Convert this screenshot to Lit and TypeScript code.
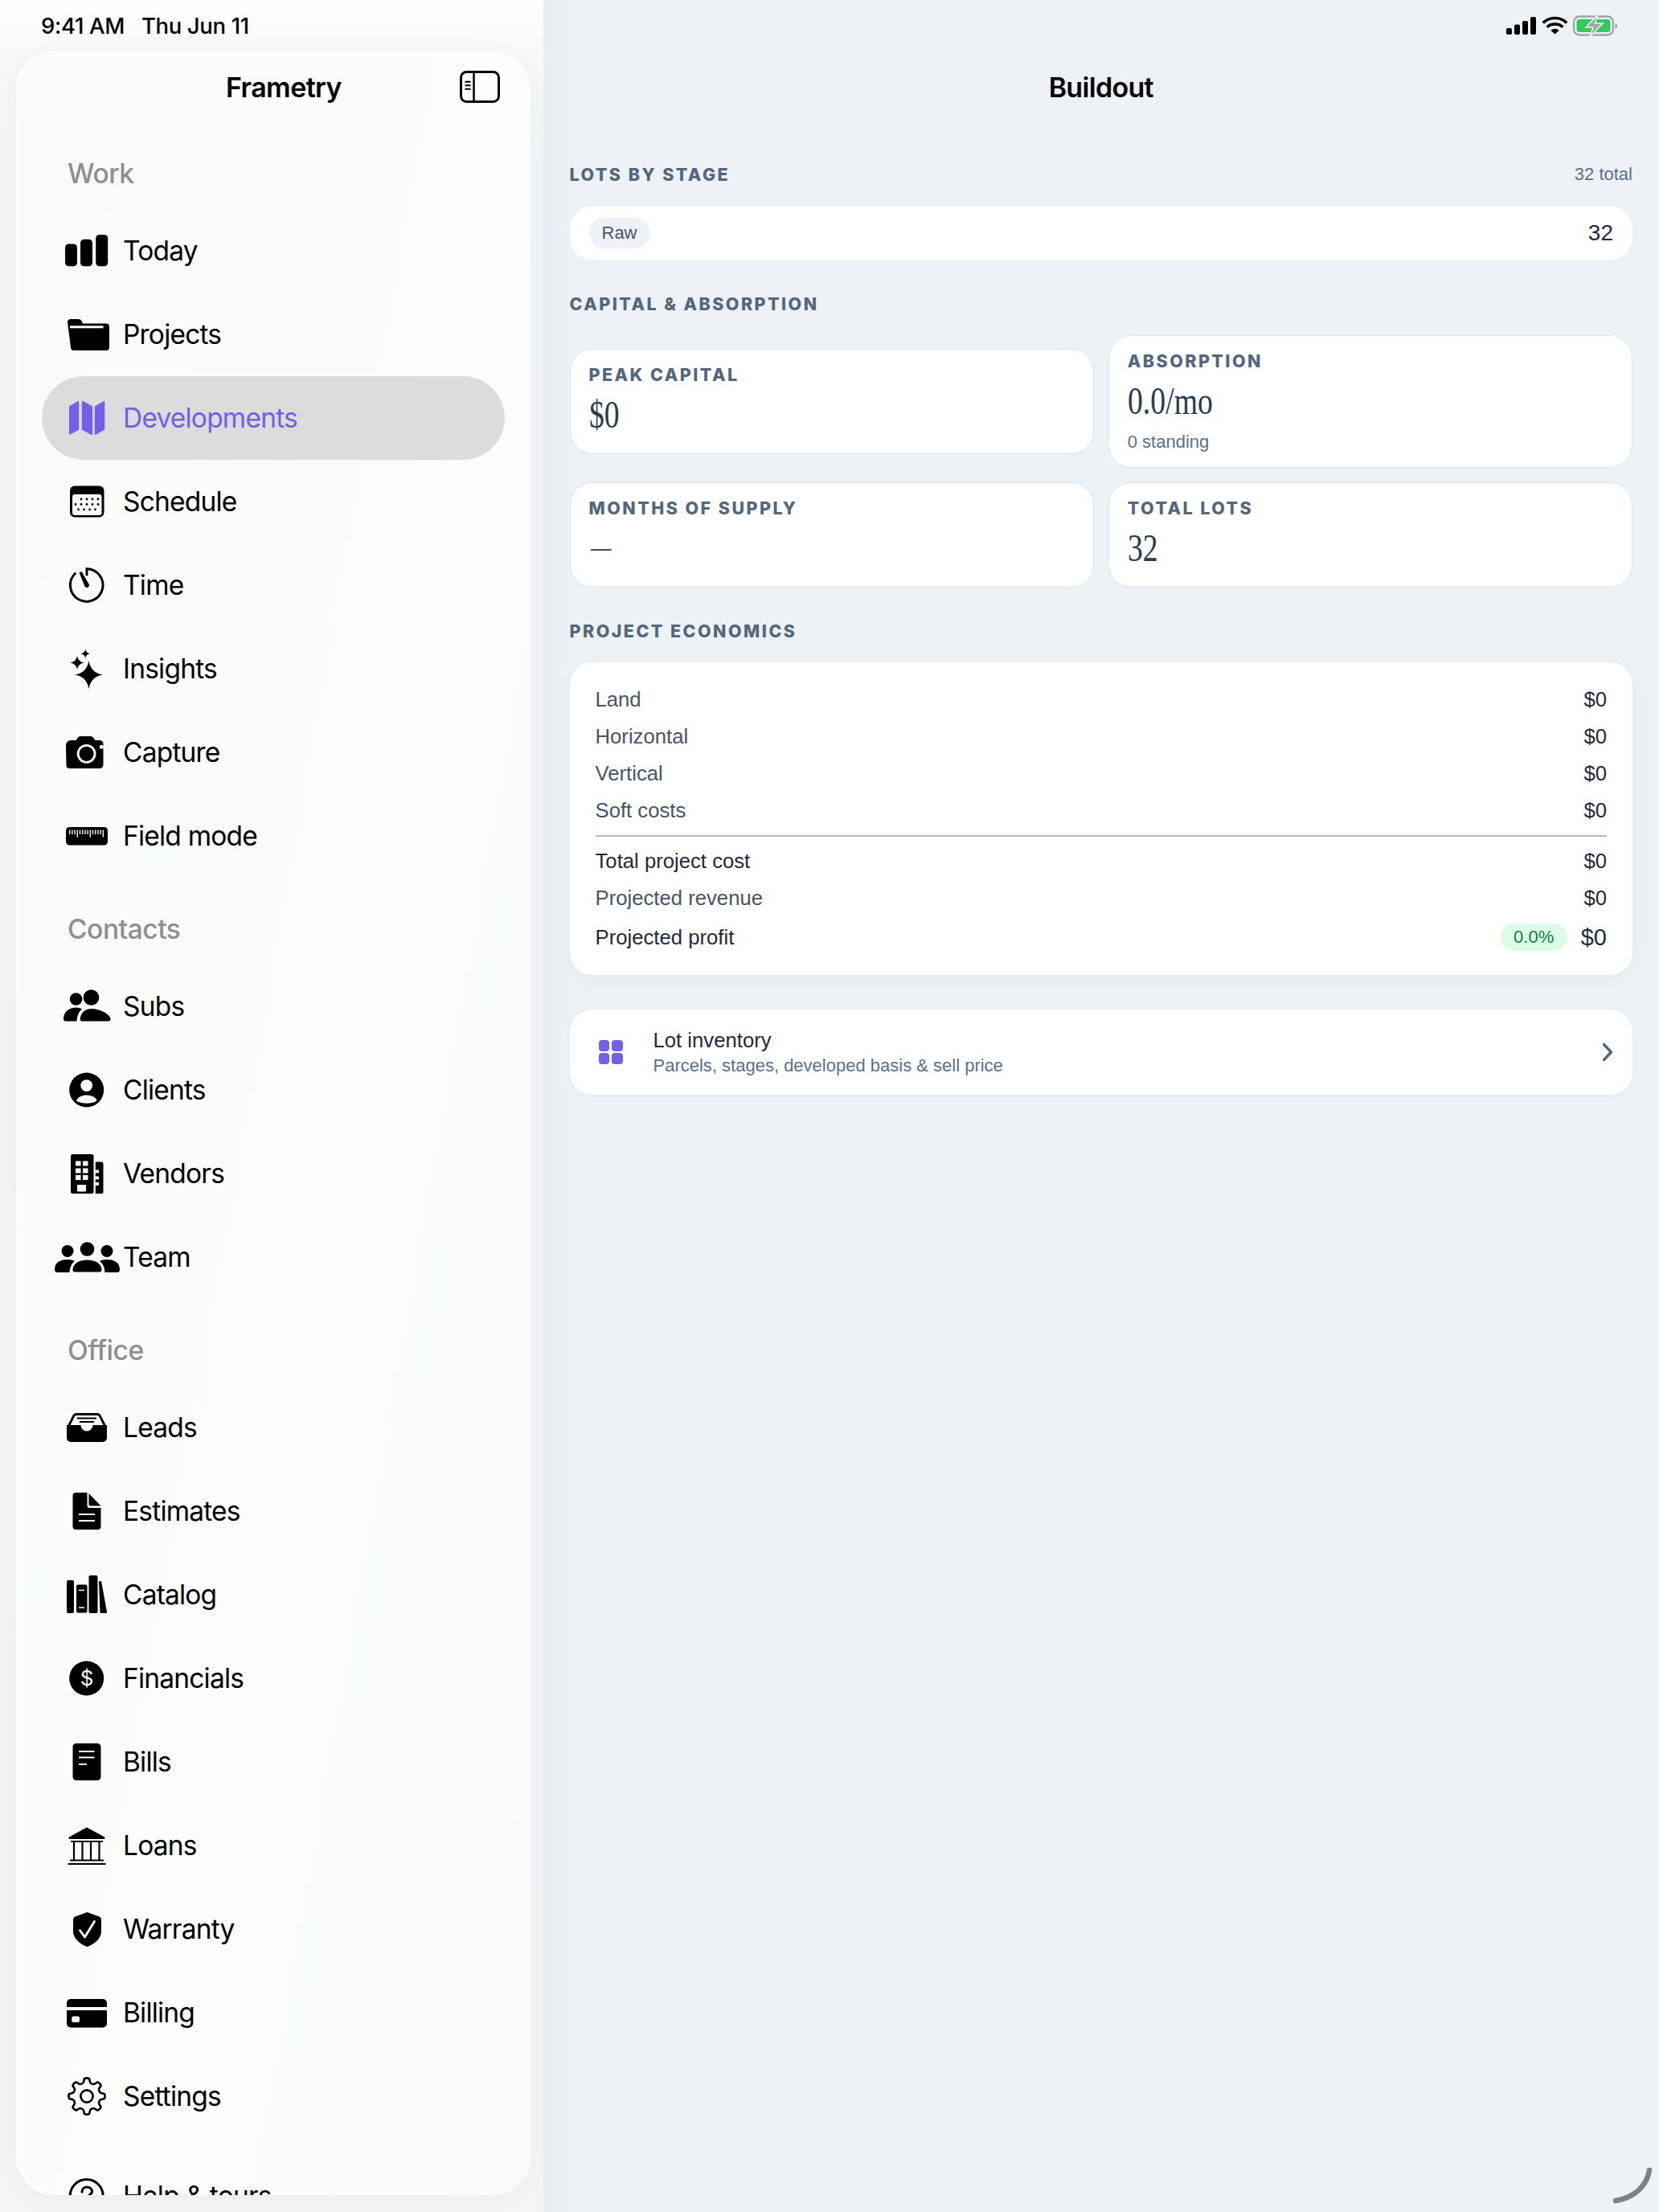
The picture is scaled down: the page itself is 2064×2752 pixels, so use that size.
import { LitElement, html, css, svg } from "lit";
import { customElement } from "lit/decorators.js";

const star = (cx: number, cy: number, r: number) => {
  const k = 0.14 * r;
  return `M${cx} ${cy - r}Q${cx + k} ${cy - k} ${cx + r} ${cy}Q${cx + k} ${cy + k} ${cx} ${cy + r}Q${cx - k} ${cy + k} ${cx - r} ${cy}Q${cx - k} ${cy - k} ${cx} ${cy - r}Z`;
};

const gear = () => {
  const pts: string[] = [];
  const p = (a: number, r: number) => {
    const t = (a * Math.PI) / 180;
    return `${(r * Math.cos(t)).toFixed(2)} ${(r * Math.sin(t)).toFixed(2)}`;
  };
  for (let i = 0; i < 8; i++) {
    const b = i * 45 - 90;
    pts.push(`${i === 0 ? "M" : "L"}${p(b - 14, 17.5)}`);
    pts.push(`L${p(b - 8, 22)}`);
    pts.push(`Q${p(b, 23.5)} ${p(b + 8, 22)}`);
    pts.push(`L${p(b + 14, 17.5)}`);
    pts.push(`Q${p(b + 22.5, 16)} ${p(b + 31, 17.5)}`);
  }
  return pts.join("") + "Z";
};

const BG = "#f9fafa";

const ICONS: Record<string, unknown> = {
  today: svg`<rect x="-27" y="-8.5" width="15" height="27.7" rx="4.5"/><rect x="-8" y="-14.3" width="15" height="33.5" rx="4.5"/><rect x="11.2" y="-20.1" width="15" height="39.3" rx="4.5"/>`,
  projects: svg`<path d="M-24 -15a4 4 0 0 1 4-4h9c3 0 4 1 5 3l1 2.500h29a4 4 0 0 1 4 4v25.500a4 4 0 0 1-4 4h-40a4 4 0 0 1-4-4z"/><rect x="-21" y="-10.700" width="41.600" height="3" fill="${BG}"/>`,
  developments: svg`<g stroke="currentColor" stroke-width="2" stroke-linejoin="round"><path d="M-21 -14L-10.800 -20V14L-21 19.500Z"/><path d="M-5.200 -20L6.100 -14V20L-5.200 14Z"/><path d="M10.800 -14L21.300 -20V14L10.800 20Z"/></g>`,
  schedule: svg`<rect x="-21" y="-19.500" width="42.500" height="39" rx="6"/><rect x="-18" y="-9" width="36.500" height="26" rx="3" fill="${BG}"/>
    ${[[-3, [-3.500, 3.500, 10.500, 17.500].map(x => x - 3.500)], [3.500, [-14, -7, 0, 7, 14]], [9.800, [-10.500, -3.500, 3.500, 10.500]]].flatMap(([y, xs]: any) => xs.map((x: number) => svg`<circle cx="${x}" cy="${y}" r="1.400"/>`))}`,
  time: svg`<g fill="none" stroke="currentColor" stroke-width="3" stroke-linecap="round"><path d="M-14.500 -14.500A20.300 20.300 0 1 0 0 -20.300V-13"/></g><path d="M-9.500 -15.500L-6.500 -17L2.500 -1.500A2.900 2.900 0 1 1 -2.500 1.500Z"/>`,
  insights: svg`<path d="${star(2.5, 7.5, 17.5)}"/><path d="${star(-12, -7.6, 8.5)}"/><path d="${star(-1.8, -18.8, 5.5)}"/>`,
  capture: svg`<path d="M-26 -9a6 6 0 0 1 6-6h6.500l2.500-3.500a4 4 0 0 1 3-1.500h13a4 4 0 0 1 3 1.500l2.500 3.500h5.500a4.500 4.500 0 0 1 4.500 4.500v26a4.500 4.500 0 0 1-4.500 4.500h-37.500a4 4 0 0 1-4-4z"/><circle cx="-.400" cy="1.800" r="10.500" fill="none" stroke="${BG}" stroke-width="2.800"/><circle cx="18.300" cy="-6.700" r="2.500" fill="${BG}"/>`,
  field: svg`<rect x="-26" y="-11" width="52" height="22.500" rx="4.500"/>${Array.from({ length: 14 }, (_, i) => svg`<rect x="${-22 + i * 3.2}" y="-7.500" width="1.400" height="${i % 5 === 3 ? 9 : 5.500}" fill="${BG}"/>`)}`,
  subs: svg`<circle cx="-13.400" cy="-9" r="7.800"/><circle cx="5.500" cy="-11" r="9.800"/><path d="M-29 15.500C-29 7 -22 1.500 -13.500 1.500C-10.500 1.500 -8 2.300 -6 3.500C-10 7 -12 11 -12.500 18.500H-26.500C-28 18.500 -29 17.500 -29 15.500Z"/><path d="M-8.300 15.500C-7.500 7 -1 3 6 3C14 3 28 8 29.500 15.500C30 17.300 28.500 18.500 27 18.500H-6C-7.500 18.500 -8.500 17.300 -8.300 15.500Z"/>`,
  clients: svg`<circle cx="-.3" cy="0" r="21.500"/><circle cx="-.3" cy="-5.400" r="7.400" fill="${BG}"/><path d="M-13 13.500C-11 8.500 -6 6.500 -.3 6.500S11 8.500 12.500 13.500C9 15.800 4 16.800 -.3 16.800S-9.500 15.800 -13 13.500Z" fill="${BG}"/>`,
  vendors: svg`<rect x="-20" y="-24" width="28.500" height="49" rx="2.500"/><path d="M10.800 -14.500H18a2.500 2.500 0 0 1 2.500 2.500V22.500a2.500 2.500 0 0 1-2.500 2.500H10.800Z"/>
    <g fill="${BG}">${[-15.500, -6.500, 2].flatMap(y => [-14, -5].map(x => svg`<rect x="${x}" y="${y}" width="6.500" height="6"/>`))}<rect x="-12" y="14" width="11" height="8.500" rx="1"/>${[-4.500, 3.500, 11].map(y => svg`<rect x="10.500" y="${y}" width="4.500" height="3.800"/>`)}</g>`,
  team: svg`<circle cx="-24" cy="-7.500" r="7.500"/><circle cx="25" cy="-7.500" r="7.500"/><path d="M-40 15.500C-40 6 -32 3 -24 3C-20 3 -17 3.800 -15 5C-19 8.500 -21 12 -21.500 19H-37C-39 19 -40 17.500 -40 15.500Z"/><path d="M41 15.500C41 6 33 3 25 3C21 3 18 3.800 16 5C20 8.500 22 12 22.500 19H38C40 19 41 17.500 41 15.500Z"/><circle cx="0.500" cy="-10" r="8.800"/><path d="M-17.500 15.500C-17 7 -8 3.500 .5 3.500S18 7 18.500 15.500C18.700 17.500 17.500 18.500 16 18.500H-15C-16.500 18.500 -17.700 17.500 -17.500 15.500Z"/>`,
  leads: svg`<path d="M-23 -1L-16.500 -14A4 4 0 0 1 -13 -16.500H13A4 4 0 0 1 16.500 -14L23 -1" fill="none" stroke="currentColor" stroke-width="2.800"/><path d="M-12 -11.500H12M-9 -7H9" stroke="currentColor" stroke-width="2.200" fill="none"/><path d="M-25 -3H-7.500A7.500 7.500 0 0 0 7.500 -3H25V13a5 5 0 0 1-5 5H-20a5 5 0 0 1-5-5Z"/>`,
  estimates: svg`<path d="M-17.500 -19a4 4 0 0 1 4-4H.5V-7a3 3 0 0 0 3 3H17.500V19a4 4 0 0 1-4 4H-13.500a4 4 0 0 1-4-4Z"/><path d="M2.500 -22L17.500 -6.500H4.500a2 2 0 0 1-2-2Z"/><path d="M-10 4H10M-10 12H10" stroke="${BG}" stroke-width="2" fill="none"/>`,
  catalog: svg`<rect x="-25" y="-18" width="9" height="41" rx="2"/><rect x="-13" y="-12.500" width="13.500" height="35" rx="2"/><rect x="2.500" y="-24" width="11" height="47" rx="2"/><path d="M15 -16.500L18 -17L25 21.500C25.200 22.500 24.500 23 23.500 23H18C17 23 16.500 22.500 16.500 21.500Z"/><path d="M-10 -5.500H-3M-10 16H-3" stroke="${BG}" stroke-width="1.600"/>`,
  financials: svg`<circle cx="-.3" cy="0" r="21.500"/><text x="-.3" y="9" text-anchor="middle" font-family="Inter, sans-serif" font-size="26" font-weight="400" fill="${BG}">$</text>`,
  bills: svg`<rect x="-17.500" y="-23" width="35" height="46" rx="4.500"/><path d="M-10 -13H9.500M-10 -5.400H9.500M-10 3H0" stroke="${BG}" stroke-width="2" fill="none"/>`,
  loans: svg`<path d="M0 -22L22 -10V-8.500H-22V-10Z" stroke="currentColor" stroke-width="1" stroke-linejoin="round"/><path d="M-20 -5H20M-21 18.500H21M-23.500 23H23.500" stroke="currentColor" stroke-width="1.800" fill="none"/><path d="M-16 -5V18M-5.500 -5V18M5 -5V18M15.500 -5V18" stroke="currentColor" stroke-width="2.200" fill="none"/>`,
  warranty: svg`<path d="M.5 -21L15.500 -15.500Q18 -14.500 18 -12V3C18 12 9 19 .5 22C-8 19 -17 12 -17 3V-12Q-17 -14.500 -14.500 -15.500Z"/><path d="M-8.500 1.700L-2.500 10L9.500 -9.500" stroke="${BG}" stroke-width="2.800" fill="none" stroke-linejoin="round" stroke-linecap="round"/>`,
  billing: svg`<rect x="-25" y="-17" width="50" height="35.500" rx="5"/><rect x="-25" y="-7" width="50" height="4" fill="${BG}"/><rect x="-18.800" y="4.500" width="9.800" height="7.500" rx="2" fill="${BG}"/>`,
  settings: svg`<path d="${gear()}" fill="none" stroke="currentColor" stroke-width="2.600" stroke-linejoin="round"/><circle r="7.600" fill="none" stroke="currentColor" stroke-width="2.600"/>`,
  help: svg`<circle cx="-.3" cy="0" r="20.500" fill="none" stroke="currentColor" stroke-width="3"/><path d="M-6 -5C-6 -9 -3 -11 0 -11C4 -11 6.500 -8.500 6.500 -5.500C6.500 -1 0 -1 0 4" fill="none" stroke="currentColor" stroke-width="3" stroke-linecap="round"/><circle cx="0" cy="10" r="2"/>`,
};

interface Item { id: string; label: string; active?: boolean; gap?: boolean }
const NAV: { title: string; items: Item[] }[] = [
  {
    title: "Work",
    items: [
      { id: "today", label: "Today" },
      { id: "projects", label: "Projects" },
      { id: "developments", label: "Developments", active: true },
      { id: "schedule", label: "Schedule" },
      { id: "time", label: "Time" },
      { id: "insights", label: "Insights" },
      { id: "capture", label: "Capture" },
      { id: "field", label: "Field mode" },
    ],
  },
  {
    title: "Contacts",
    items: [
      { id: "subs", label: "Subs" },
      { id: "clients", label: "Clients" },
      { id: "vendors", label: "Vendors" },
      { id: "team", label: "Team" },
    ],
  },
  {
    title: "Office",
    items: [
      { id: "leads", label: "Leads" },
      { id: "estimates", label: "Estimates" },
      { id: "catalog", label: "Catalog" },
      { id: "financials", label: "Financials" },
      { id: "bills", label: "Bills" },
      { id: "loans", label: "Loans" },
      { id: "warranty", label: "Warranty" },
      { id: "billing", label: "Billing" },
      { id: "settings", label: "Settings" },
      { id: "help", label: "Help & tours", gap: true },
    ],
  },
];

const ECON_TOP = ["Land", "Horizontal", "Vertical", "Soft costs"];

@customElement("app-root")
export class AppRoot extends LitElement {
  static styles = css`
    :host {
      display: flex;
      width: 2064px;
      height: 2752px;
      overflow: hidden;
      position: relative;
      background: #edf2f7;
      font-family: "Liberation Sans", Arial, sans-serif;
      color: #000;
    }
    .side {
      width: 676px;
      flex: none;
      display: flex;
      flex-direction: column;
      background: linear-gradient(180deg, #ffffff 0, #f7f8f8 64px, #f4f5f6 200px, #f4f5f6 100%);
      font-family: Inter, sans-serif;
    }
    .status-left {
      height: 64px;
      flex: none;
      display: flex;
      align-items: center;
      padding: 0 0 0 51px;
      gap: 21px;
      font-size: 27.5px;
      font-weight: 500;
      letter-spacing: -0.35px;
    }
    .panel {
      flex: 1;
      min-height: 0;
      margin: 0 16px 21px 20px;
      background: linear-gradient(100deg, #f9fafa 0, #fbfcfb 60%, #f9fafb 100%);
      border-radius: 48px;
      box-shadow: 0 4px 28px rgba(60, 70, 90, 0.05), inset 0 0 0 2px rgba(255, 255, 255, 0.55);
      overflow: hidden;
    }
    .brand {
      height: 88px;
      display: flex;
      align-items: center;
      position: relative;
      padding-left: 261px;
      font-size: 34px;
      font-weight: 600;
      letter-spacing: -0.6px;
    }
    .toggle {
      position: absolute;
      left: 552px;
      top: 24px;
      width: 50px;
      height: 40px;
    }
    .group {
      padding: 0 32px;
    }
    .group-title {
      height: 88px;
      padding-top: 20px;
      display: flex;
      align-items: center;
      padding-left: 32px;
      font-size: 33.5px;
      font-weight: 500;
      color: #8e8e93;
      letter-spacing: -0.45px;
    }
    .row {
      height: 104px;
      display: flex;
      align-items: center;
      padding-left: 32px;
      gap: 21px;
      border-radius: 52px;
      font-size: 33.5px;
      font-weight: 400;
      letter-spacing: -0.8px;
      color: #000;
    }
    .row.gap {
      margin-top: 20px;
    }
    .row.active {
      background: #dbdcdc;
      color: #7360e6;
    }
    .ico {
      width: 48px;
      height: 48px;
      flex: none;
      display: flex;
      align-items: center;
      justify-content: center;
    }
    .ico svg {
      flex: none;
      width: 92px;
      height: 64px;
      fill: currentColor;
      overflow: visible;
    }
    .main {
      flex: 1;
      min-width: 0;
      display: flex;
      flex-direction: column;
      padding: 0 33px 0 32.5px;
      background: linear-gradient(90deg, #e7ecf1 0, #edf2f7 30px);
    }
    .status-right {
      height: 64px;
      flex: none;
      display: flex;
      align-items: center;
      justify-content: flex-end;
      margin-right: 17px;
    }
    .status-right svg {
      display: block;
      width: 140px;
      height: 30px;
    }
    .title {
      height: 88px;
      flex: none;
      display: flex;
      align-items: center;
      justify-content: center;
      font-family: Inter, sans-serif;
      font-size: 34px;
      font-weight: 600;
      letter-spacing: -0.7px;
    }
    .head {
      height: 30px;
      margin: 39px 0 24px;
      display: flex;
      align-items: center;
      justify-content: space-between;
    }
    .head.first {
      margin-top: 50px;
    }
    .label {
      font-family: Inter, sans-serif;
      font-size: 21.5px;
      font-weight: 800;
      letter-spacing: 2.45px;
      color: #53667f;
      text-transform: uppercase;
      line-height: 30px;
      white-space: nowrap;
    }
    .small {
      font-size: 22px;
      color: #5b6f8c;
    }
    .card {
      background: #fff;
      border-radius: 28px;
    }
    .stage {
      height: 68px;
      display: flex;
      align-items: center;
      justify-content: space-between;
      padding: 0 24px;
      box-shadow: 0 0 0 1px #e6ecf3;
    }
    .chip {
      height: 38px;
      display: flex;
      align-items: center;
      padding: 0 16px;
      border-radius: 19px;
      background: #edf2f7;
      font-size: 22px;
      color: #475569;
    }
    .stage-n {
      font-size: 28px;
      color: #1e293b;
    }
    .stats {
      display: grid;
      grid-template-columns: 1fr 1fr;
      gap: 18px;
      align-items: center;
    }
    .stat {
      padding: 16px 23px 15px;
      border: 1px solid #d9e4f0;
    }
    .value {
      height: 68px;
      display: flex;
      align-items: center;
      font-family: "Liberation Serif", "Times New Roman", serif;
      font-size: 49px;
      color: #2b3a50;
    }
    .value span {
      display: inline-block;
      transform: scaleX(0.77);
      transform-origin: left center;
    }
    .value .dash {
      font-size: 33px;
      transform: translateX(2px) scaleX(0.77);
    }
    .sub {
      height: 34px;
      box-sizing: border-box;
      padding-top: 1px;
      display: flex;
      align-items: center;
      font-size: 22px;
      color: #5b6f8c;
    }
    .econ {
      padding: 23px 32px 21px;
      box-shadow: 0 4px 20px rgba(71, 85, 105, 0.07);
    }
    .line {
      height: 46px;
      display: flex;
      align-items: center;
      justify-content: space-between;
      font-size: 25.7px;
      color: #475569;
    }
    .amt {
      color: #1e293b;
    }
    .line.strong {
      color: #1e293b;
    }
    .line.profit {
      height: 52px;
    }
    .rule {
      height: 1.5px;
      background: #b4b8be;
      margin: 8px 0 7.5px;
    }
    .right {
      display: flex;
      align-items: center;
      gap: 17px;
    }
    .pct {
      height: 34px;
      display: flex;
      align-items: center;
      padding: 0 16.5px;
      border-radius: 17px;
      background: #dcfce7;
      color: #15803d;
      font-size: 22px;
    }
    .big {
      font-size: 29px;
      color: #1e293b;
    }
    .lot {
      margin-top: 43px;
      height: 106px;
      box-sizing: border-box;
      display: flex;
      align-items: center;
      padding: 0 24px 0 36px;
      gap: 38px;
      box-shadow: 0 2px 10px rgba(71, 85, 105, 0.06);
    }
    .lot .grid {
      width: 30px;
      height: 30px;
      flex: none;
      display: grid;
      grid-template-columns: 1fr 1fr;
      gap: 2.5px;
    }
    .lot .grid i {
      background: #7360e6;
      border-radius: 4px;
    }
    .lot-text {
      flex: 1;
      display: flex;
      flex-direction: column;
      padding-top: 2px;
    }
    .lot-title {
      font-size: 25.7px;
      line-height: 32px;
      color: #1e293b;
    }
    .lot-sub {
      font-size: 22px;
      line-height: 32px;
      color: #5b6f8c;
    }
    .chev {
      width: 14px;
      height: 24px;
      flex: none;
    }
    .grabber {
      position: absolute;
      right: 0;
      bottom: 0;
      width: 60px;
      height: 60px;
    }
  `;

  private renderStat(label: string, value: string, sub?: string) {
    return html`<div class="card stat">
      <div class="label">${label}</div>
      <div class="value"><span class="${value === "—" ? "dash" : ""}">${value}</span></div>
      ${sub ? html`<div class="sub">${sub}</div>` : ""}
    </div>`;
  }

  render() {
    return html`
      <aside class="side">
        <div class="status-left"><span>9:41 AM</span><span>Thu Jun 11</span></div>
        <div class="panel">
          <div class="brand">
            Frametry
            <svg class="toggle" viewBox="0 0 50 40">
              <rect x="1.500" y="1.500" width="47" height="37" rx="7" fill="none" stroke="#000" stroke-width="3"/>
              <path d="M17.500 1.500V38.500" stroke="#000" stroke-width="2.500"/>
              <path d="M6.500 13.800H13.500M6.500 18.200H13.500M6.500 22.700H13.500" stroke="#000" stroke-width="2"/>
            </svg>
          </div>
          ${NAV.map(
            (g) => html`<div class="group">
              <div class="group-title">${g.title}</div>
              ${g.items.map(
                (it) => html`<div class="row ${it.active ? "active" : ""} ${it.gap ? "gap" : ""}">
                  <span class="ico"><svg viewBox="-46 -32 92 64">${ICONS[it.id]}</svg></span>
                  <span>${it.label}</span>
                </div>`
              )}
            </div>`
          )}
        </div>
      </aside>
      <main class="main">
        <div class="status-right">
          <svg viewBox="0 0 140 30">
            <g fill="#000">
              <rect x="0" y="18" width="7" height="8" rx="2"/>
              <rect x="10" y="13.500" width="7" height="12.500" rx="2"/>
              <rect x="20" y="9" width="7" height="17" rx="2"/>
              <rect x="30" y="4" width="7" height="22" rx="2"/>
            </g>
            <g transform="translate(0 2)">
              <g fill="none" stroke="#000" stroke-width="3.600">
                <path d="M45.800 9.500C53.500 1.500 67.500 1.500 75.200 9.500"/>
                <path d="M50.800 14.800C55.500 9.700 65.500 9.700 70.200 14.800"/>
              </g>
              <path d="M55.500 19C58.300 16 62.700 16 65.500 19L60.500 23.500Z" fill="#000"/>
            </g>
            <rect x="84" y="3.500" width="49" height="23" rx="7" fill="none" stroke="#a3a5a8" stroke-width="2.400"/>
            <rect x="87.500" y="7" width="42" height="16" rx="4" fill="#34c759"/>
            <path d="M135.500 12V19L138 17V14Z" fill="#a3a5a8"/>
            <path d="M114 1L99 17H108L104 29L120 12H110.500Z" fill="#a3a5a8" stroke="#edf2f7" stroke-width="1.500"/>
          </svg>
        </div>
        <div class="title">Buildout</div>

        <div class="head first"><span class="label">Lots by stage</span><span class="small">32 total</span></div>
        <div class="card stage"><span class="chip">Raw</span><span class="stage-n">32</span></div>

        <div class="head"><span class="label">Capital &amp; absorption</span></div>
        <div class="stats">
          ${this.renderStat("Peak capital", "$0")}
          ${this.renderStat("Absorption", "0.0/mo", "0 standing")}
          ${this.renderStat("Months of supply", "—")}
          ${this.renderStat("Total lots", "32")}
        </div>

        <div class="head"><span class="label">Project economics</span></div>
        <div class="card econ">
          ${ECON_TOP.map(
            (l) => html`<div class="line"><span>${l}</span><span class="amt">$0</span></div>`
          )}
          <div class="rule"></div>
          <div class="line strong"><span>Total project cost</span><span class="amt">$0</span></div>
          <div class="line"><span>Projected revenue</span><span class="amt">$0</span></div>
          <div class="line strong profit">
            <span>Projected profit</span>
            <span class="right"><span class="pct">0.0%</span><span class="big">$0</span></span>
          </div>
        </div>

        <div class="card lot">
          <div class="grid"><i></i><i></i><i></i><i></i></div>
          <div class="lot-text">
            <span class="lot-title">Lot inventory</span>
            <span class="lot-sub">Parcels, stages, developed basis &amp; sell price</span>
          </div>
          <svg class="chev" viewBox="0 0 14 24">
            <path d="M2.500 2.500L11.500 12L2.500 21.500" fill="none" stroke="#53667f" stroke-width="3.400" stroke-linecap="round" stroke-linejoin="round"/>
          </svg>
        </div>
      </main>
      <svg class="grabber" viewBox="0 0 60 60">
        <path d="M48 8C45 27 30 42 6 46" fill="none" stroke="#808080" stroke-width="6.500" stroke-linecap="round"/>
      </svg>
    `;
  }
}
